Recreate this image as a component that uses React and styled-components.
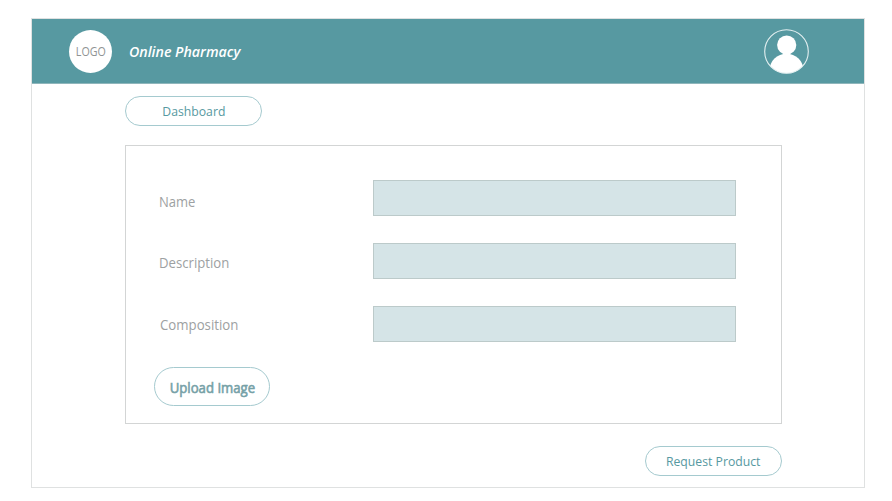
import React from "react";
import styled, { createGlobalStyle } from "styled-components";

const GlobalStyle = createGlobalStyle`
  * { box-sizing: border-box; }
  body {
    margin: 0;
    background: #fff;
    font-family: "Open Sans", "Noto Sans", sans-serif;
  }
`;

const Page = styled.div`
  width: 892px;
  height: 501px;
  padding: 18px 27px 13px 31px;
  overflow: hidden;
`;

const Frame = styled.div`
  width: 834px;
  height: 470px;
  border: 1px solid #dfe1e1;
  display: flex;
  flex-direction: column;
`;

const Header = styled.header`
  height: 65px;
  flex: none;
  display: flex;
  align-items: center;
  padding: 0 55px 0 37px;
  background: #5799a1;
  border-bottom: 1px solid #8fb6bb;
`;

const Logo = styled.div`
  width: 43px;
  height: 43px;
  border-radius: 50%;
  background: #fff;
  color: #8f9494;
  display: flex;
  align-items: center;
  justify-content: center;
  font-size: 12px;
`;

/* Slightly condensed text; $origin keeps left-aligned labels on their edge. */
const Label = styled.span`
  display: inline-block;
  white-space: nowrap;
  transform: scaleX(${(p) => p.$condense || 1});
  transform-origin: ${(p) => p.$origin || "center"};
`;

const Title = styled.h1`
  margin: 1px 0 0 17px;
  color: #fff;
  font-size: 14.5px;
  line-height: 20px;
  font-style: italic;
  font-weight: 600;
`;

const Avatar = styled.svg`
  width: 45px;
  height: 45px;
  margin-left: auto;
  display: block;
`;

const Content = styled.main`
  padding: 12px 82px 0 93px;
  display: flex;
  flex-direction: column;
  align-items: flex-start;
`;

const PillButton = styled.button`
  width: ${(p) => p.$width}px;
  height: ${(p) => p.$height || 30}px;
  padding: ${(p) => (p.$strong ? 2 : 0)}px 0 0;
  margin-top: ${(p) => p.$shift || 0}px;
  display: flex;
  align-items: center;
  justify-content: center;
  border: 1px solid #a5cacf;
  border-radius: 20px;
  background: #fff;
  color: ${(p) => (p.$strong ? "#76a1a7" : "#5799a1")};
  font-family: inherit;
  font-size: ${(p) => (p.$strong ? 14 : 13.5)}px;
  font-weight: 400;
  -webkit-text-stroke: ${(p) => (p.$strong ? "0.6px #76a1a7" : "0")};
`;

const Panel = styled.form`
  width: 657px;
  height: 279px;
  margin: 19px 0 22px;
  padding: 34px 0 0 28px;
  border: 1px solid #d3d5d5;
`;

const Row = styled.div`
  height: 63px;
  display: flex;
  align-items: flex-start;
`;

const FieldName = styled.label`
  width: 219px;
  padding: 12px 0 0 ${(p) => p.$indent || 5}px;
  margin-top: ${(p) => p.$shift || 0}px;
  color: #9da1a2;
  font-size: 14px;
  line-height: 20px;
`;

const Field = styled.input`
  width: 363px;
  height: 36px;
  padding: 0 8px;
  border: 1px solid #bccaca;
  border-radius: 0;
  outline: none;
  background: #d5e4e7;
  font: inherit;
`;

const Footer = styled.footer`
  width: 657px;
  display: flex;
  justify-content: flex-end;
`;

const fields = [
  { name: "Name", condense: 0.93, shift: 0, indent: 5 },
  { name: "Description", condense: 0.94, shift: -2, indent: 5 },
  { name: "Composition", condense: 0.945, shift: -3, indent: 6 },
];

export default function App() {
  return (
    <Page>
      <GlobalStyle />
      <Frame>
        <Header>
          <Logo>
            <Label $condense={0.89}>LOGO</Label>
          </Logo>
          <Title>
            <Label $condense={0.98} $origin="left">Online Pharmacy</Label>
          </Title>
          <Avatar viewBox="0 0 45 45" aria-label="Account">
            <defs>
              <clipPath id="avatar-ring">
                <circle cx="22.5" cy="22.5" r="21.8" />
              </clipPath>
            </defs>
            <g clipPath="url(#avatar-ring)" fill="#fff">
              <circle cx="22.7" cy="16" r="9.6" />
              <ellipse cx="22.5" cy="41.2" rx="17" ry="16.4" />
            </g>
            <circle cx="22.5" cy="22.5" r="21.8" fill="none" stroke="#e4f0f1" strokeWidth="1.1" />
          </Avatar>
        </Header>
        <Content>
          <PillButton type="button" $width={137}>
            <Label $condense={0.905}>Dashboard</Label>
          </PillButton>
          <Panel>
            {fields.map((f) => (
              <Row key={f.name}>
                <FieldName htmlFor={f.name} $shift={f.shift} $indent={f.indent}>
                  <Label $condense={f.condense} $origin="left">{f.name}</Label>
                </FieldName>
                <Field id={f.name} />
              </Row>
            ))}
            <PillButton type="button" $width={116} $height={39} $shift={-2} $strong>
              <Label $condense={0.94}>Upload Image</Label>
            </PillButton>
          </Panel>
          <Footer>
            <PillButton type="button" $width={137}>
              <Label $condense={0.905}>Request Product</Label>
            </PillButton>
          </Footer>
        </Content>
      </Frame>
    </Page>
  );
}
